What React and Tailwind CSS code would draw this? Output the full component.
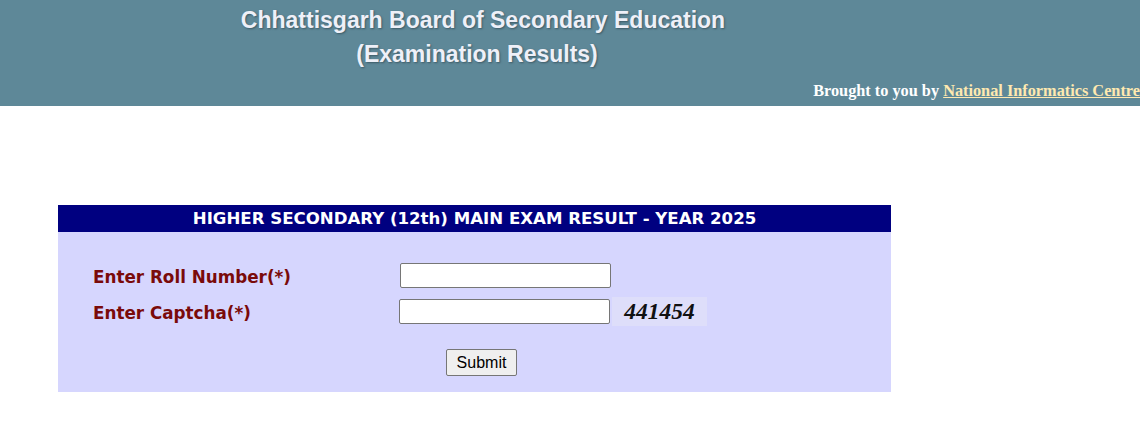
import React from "react";

const App = () => {
  return (
    <div className="min-h-[426px] w-[1140px] bg-white">
      {/* header */}
      <div className="h-[106px] bg-[#5e8898] relative">
        <div
          className="w-[966px] pt-[3px] text-center text-[23px] font-bold leading-[34px] text-[#eef0f8]"
          style={{ fontFamily: "'Liberation Sans', Arial, sans-serif", textShadow: "1px 1px 2px #3d5a66" }}
        >
          <div>Chhattisgarh Board of Secondary Education</div>
          <div className="pr-[12px]">(Examination Results)</div>
        </div>
        <div
          className="absolute right-0 top-[79px] text-[16.3px] font-bold text-white"
          style={{ fontFamily: "'Liberation Serif', 'Times New Roman', serif" }}
        >
          Brought to you by{" "}
          <a href="#" className="text-[#ffe9b0] underline">
            National Informatics Centre
          </a>
        </div>
      </div>

      {/* form panel */}
      <div className="ml-[58px] mt-[99px] w-[833px] bg-[#d6d6fe]">
        <div
          className="h-[27px] bg-[#000080] text-center text-[16.6px] font-bold leading-[27px] text-white"
          style={{ fontFamily: "Tahoma, 'DejaVu Sans', sans-serif" }}
        >
          HIGHER SECONDARY (12th) MAIN EXAM RESULT - YEAR 2025
        </div>
        <div className="pt-[30px] pb-[16px]">
          <div className="flex items-center h-[26px]">
            <div
              className="mt-[6px] w-[342px] pl-[35px] text-[16.8px] font-bold text-[#7a0a0a]"
              style={{ fontFamily: "Tahoma, 'DejaVu Sans', sans-serif" }}
            >
              Enter Roll Number(*)
            </div>
            <input
              type="text"
              className="h-[25px] w-[211px] rounded-[2px] border border-[#767676] bg-white"
            />
          </div>
          <div className="mt-[9px] flex items-center h-[29px]">
            <div
              className="mt-[4px] w-[341px] pl-[35px] text-[16.8px] font-bold text-[#7a0a0a]"
              style={{ fontFamily: "Tahoma, 'DejaVu Sans', sans-serif" }}
            >
              Enter Captcha(*)
            </div>
            <input
              type="text"
              className="h-[25px] w-[211px] rounded-[2px] border border-[#767676] bg-white"
            />
            <div
              className="ml-[2px] flex h-[29px] w-[95px] items-center justify-center bg-[#dedefa] text-[23.5px] font-bold italic text-[#111]"
              style={{ fontFamily: "'Liberation Serif', 'Times New Roman', serif" }}
            >
              441454
            </div>
          </div>
          <div className="mt-[23px] pl-[388px]">
            <button
              type="button"
              className="h-[27px] w-[71px] rounded-[2px] border border-[#767676] bg-[#efefef] text-[16px] text-black"
              style={{ fontFamily: "'Liberation Sans', Arial, sans-serif" }}
            >
              Submit
            </button>
          </div>
        </div>
      </div>
    </div>
  );
};

export default App;
